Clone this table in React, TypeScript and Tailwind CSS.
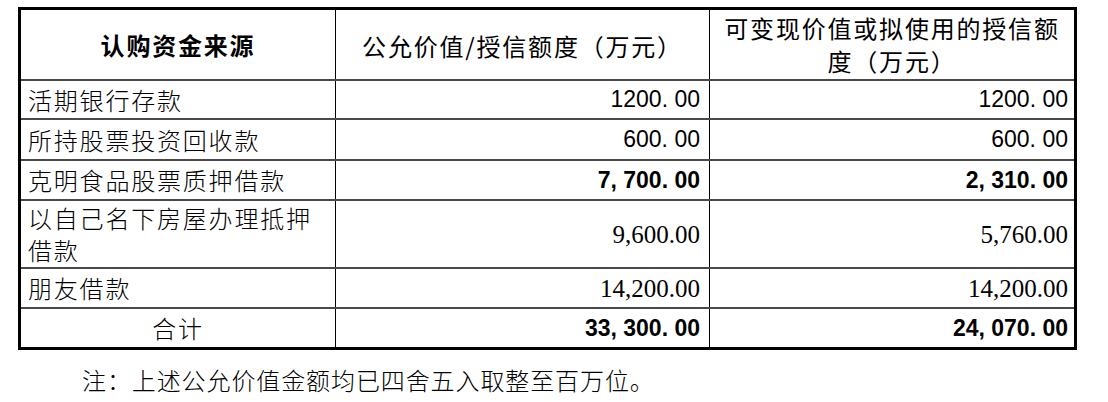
import React from "react";

type Row = {
  label: React.ReactNode;
  fair: string;
  usable: string;
  kind: "sans" | "bold" | "serif";
  h: string;
  center?: boolean;
};

const rows: Row[] = [
  { label: "活期银行存款", fair: "1200. 00", usable: "1200. 00", kind: "sans", h: "h-[39px]" },
  { label: "所持股票投资回收款", fair: "600. 00", usable: "600. 00", kind: "sans", h: "h-[41px]" },
  { label: "克明食品股票质押借款", fair: "7, 700. 00", usable: "2, 310. 00", kind: "bold", h: "h-[40px]" },
  {
    label: (
      <>
        以自己名下房屋办理抵押
        <br />
        借款
      </>
    ),
    fair: "9,600.00",
    usable: "5,760.00",
    kind: "serif",
    h: "h-[68px]",
  },
  { label: "朋友借款", fair: "14,200.00", usable: "14,200.00", kind: "serif", h: "h-[40px]" },
  { label: "合计", fair: "33, 300. 00", usable: "24, 070. 00", kind: "bold", h: "h-[40px]", center: true },
];

const cjk = "font-['Noto_Sans_CJK_SC',sans-serif]";

function numClass(kind: Row["kind"]) {
  if (kind === "serif") return "font-['Liberation_Serif',serif] text-[25px]";
  if (kind === "bold") return "font-['Liberation_Sans',sans-serif] text-[23px] font-bold";
  return "font-['Liberation_Sans',sans-serif] text-[23px]";
}

export default function App() {
  return (
    <div className="w-[1108px] h-[402px] bg-white text-black overflow-hidden">
      <div className="pt-[7px] pl-[18px]">
        <div className="w-[1059px] border-[3px] border-black">
          {/* header */}
          <div className="grid grid-cols-[314px_374px_1fr] h-[69px]">
            <div className={`flex items-center justify-center ${cjk} text-[24px] font-bold tracking-[1.8px] leading-none`}>
              认购资金来源
            </div>
            <div className={`flex items-center justify-center border-l border-black ${cjk} text-[24px] tracking-[1.8px] leading-none pt-[2px]`}>
              公允价值/授信额度（万元）
            </div>
            <div className={`flex items-center justify-center text-center border-l border-black ${cjk} text-[24px] tracking-[1.8px] leading-[33px] pb-[1px]`}>
              <span>
                可变现价值或拟使用的授信额
                <br />
                度（万元）
              </span>
            </div>
          </div>

          {rows.map((r, i) => (
            <div key={i} className={`grid grid-cols-[314px_374px_1fr] border-t-2 border-[#4a4a4a] ${r.h}`}>
              <div
                className={`flex items-center ${r.center ? "justify-center" : "pl-[7px]"} ${cjk} text-[24px] font-light tracking-[1.8px] leading-[32px]`}
              >
                <span>{r.label}</span>
              </div>
              <div className={`flex items-center justify-end pr-[9px] border-l border-black ${numClass(r.kind)} leading-none`}>
                {r.fair}
              </div>
              <div className={`flex items-center justify-end pr-[6px] border-l border-black ${numClass(r.kind)} leading-none`}>
                {r.usable}
              </div>
            </div>
          ))}
        </div>
      </div>

      <p className={`mt-[18px] pl-[82px] ${cjk} text-[24px] font-light tracking-[0.9px] leading-none`}>
        注：上述公允价值金额均已四舍五入取整至百万位。
      </p>
    </div>
  );
}
